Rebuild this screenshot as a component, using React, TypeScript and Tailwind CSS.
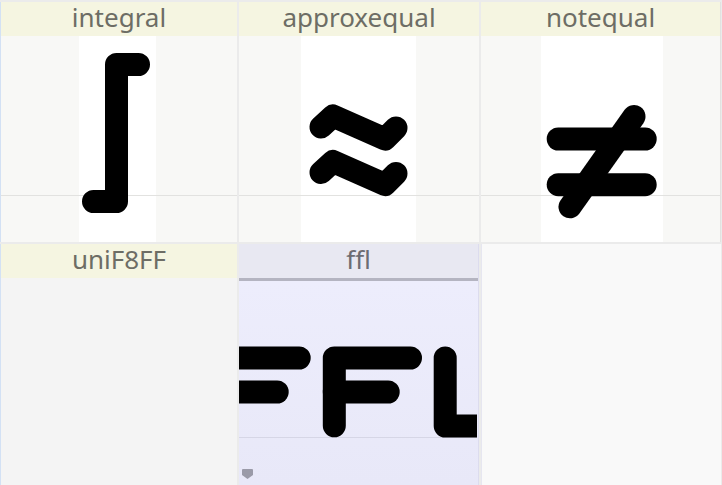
import React from "react";

const font = { fontFamily: '"Noto Sans", "Open Sans", sans-serif' };

function Header({ label, selected }: { label: string; selected?: boolean }) {
  return (
    <div
      className={
        "h-[34px] shrink-0 text-center text-[26px] leading-[31px] " +
        (selected ? "bg-[#e8e8f2] text-[#6c6c72]" : "bg-[#f5f5e1] text-[#6d6d65]")
      }
      style={font}
    >
      {label}
    </div>
  );
}

const stroke = {
  fill: "none",
  stroke: "#000",
  strokeWidth: 23,
  strokeLinecap: "round" as const,
  strokeLinejoin: "round" as const,
};

export default function App() {
  return (
    <div className="w-[722px] h-[485px] overflow-hidden bg-[#ebebeb] pt-[2px]">
      <div className="grid grid-cols-[237px_240px_240px] grid-rows-[240px_241px] gap-[2px]">
        {/* integral */}
        <div className="flex flex-col border-l border-[#d3e1f4] bg-[#f8f8f6]">
          <Header label="integral" />
          <svg width="236" height="206" className="block">
            <rect x="78" y="0" width="77" height="206" fill="#fff" />
            <line x1="0" y1="159.5" x2="236" y2="159.5" stroke="#e2e2e0" strokeWidth="1" />
            <path d="M137.5 28.5 H115.5 V165.5 H92.5" {...stroke} />
          </svg>
        </div>

        {/* approxequal */}
        <div className="flex flex-col bg-[#f8f8f6]">
          <Header label="approxequal" />
          <svg width="240" height="206" className="block">
            <rect x="62" y="0" width="115" height="206" fill="#fff" />
            <line x1="0" y1="159.5" x2="240" y2="159.5" stroke="#e2e2e0" strokeWidth="1" />
            <path d="M82 91 L94 80 L146 103 L157 92" {...stroke} />
            <path d="M82 136.5 L94 125.5 L146 148.5 L157 137.5" {...stroke} />
          </svg>
        </div>

        {/* notequal */}
        <div className="flex flex-col border-r border-[#e2e2e0] bg-[#f8f8f6]">
          <Header label="notequal" />
          <svg width="239" height="206" className="block">
            <rect x="60" y="0" width="122" height="206" fill="#fff" />
            <line x1="0" y1="159.5" x2="239" y2="159.5" stroke="#e2e2e0" strokeWidth="1" />
            <path d="M77.2 103 H164.2" {...stroke} />
            <path d="M77.2 148.7 H164.2" {...stroke} />
            <path d="M153 80.5 L89 170.8" {...stroke} />
          </svg>
        </div>

        {/* uniF8FF */}
        <div className="flex flex-col border-l border-[#d3e1f4] bg-[#f4f4f4]">
          <Header label="uniF8FF" />
        </div>

        {/* ffl selected */}
        <div className="flex flex-col border-r border-[#dcdcee] bg-gradient-to-b from-[#eeeefd] to-[#e8e8f8]">
          <Header label="ffl" selected />
          <div className="h-[3px] shrink-0 bg-[#b4b4c1]" />
          <svg width="238" height="204" className="block">
            <line x1="0" y1="156.5" x2="238" y2="156.5" stroke="#d6d6e6" strokeWidth="1" />
            <path d="M60.2 77 H-16 V145" {...stroke} />
            <path d="M38.2 111 H-16" {...stroke} />
            <path d="M171.5 77 H95.3 V144.8" {...stroke} />
            <path d="M149.2 111 H95.3" {...stroke} />
            <path d="M206.2 77 V145 H270" {...stroke} />
            <path d="M3 189 Q3 188 4 188 H13 Q14 188 14 189 V194 L8.5 198 L3 194 Z" fill="#9a9aa8" />
          </svg>
        </div>

        {/* empty */}
        <div className="border-l border-[#e6e6f0] bg-[#f9f9f9]" />
      </div>
    </div>
  );
}
